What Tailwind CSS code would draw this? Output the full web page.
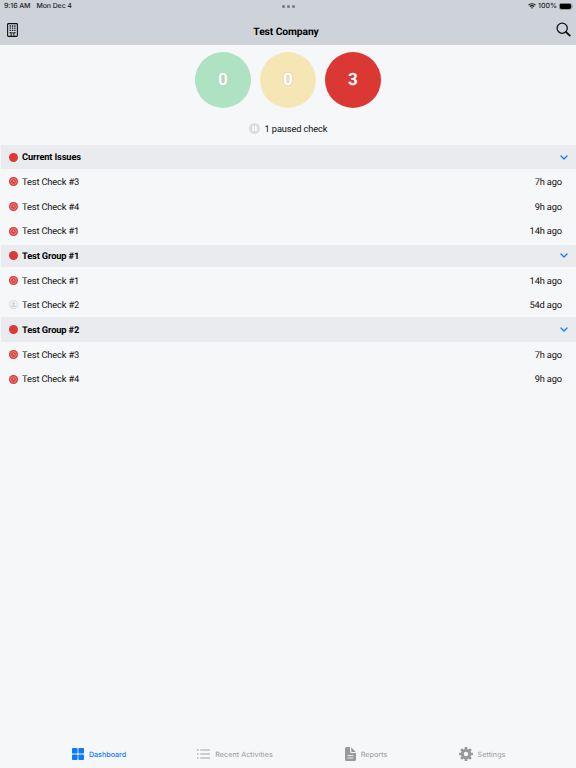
<!DOCTYPE html>
<html lang="en">
<head>
  <meta charset="UTF-8" />
  <meta name="viewport" content="width=device-width, initial-scale=1.0"/>
  <title>Test Company</title>
  <script src="https://cdn.jsdelivr.net/npm/@tailwindcss/browser@4"></script>
</head>
<body class="bg-[#f6f7f9] text-[#111] font-[Roboto,sans-serif] [text-rendering:geometricPrecision]">
  <!-- shared icons -->
  <svg class="hidden">
    <symbol id="alert" viewBox="0 0 18 18">
      <circle cx="9" cy="9" r="9" fill="#dc3935"/>
      <circle cx="9" cy="9" r="5.7" fill="none" stroke="#f3a9a7" stroke-width="1.4"/>
      <path d="M9 6v3.4h2.6M6.6 9.5h1" fill="none" stroke="#f8c9c8" stroke-width="1.3"/>
    </symbol>
    <symbol id="chevron" viewBox="0 0 8 5">
      <path d="M1 1l3 3 3-3" fill="none" stroke="#0a7aff" stroke-width="1.3" stroke-linecap="round" stroke-linejoin="round"/>
    </symbol>
  </svg>

  <div class="w-[576px] h-[768px] flex flex-col overflow-hidden">
    <header class="h-[45px] bg-[#ced2d9] shrink-0">
      <div class="h-3 grid grid-cols-3 items-center pl-1 pr-[3px] font-[Inter,sans-serif] text-[7px] font-medium text-[#222]">
        <div class="flex gap-[6px] whitespace-nowrap tracking-[-0.1px] pt-px"><span>9:16 AM</span><span>Mon Dec 4</span></div>
        <div class="flex justify-center gap-[1.7px]">
          <i class="size-[3px] rounded-full bg-[#74777c]"></i>
          <i class="size-[3px] rounded-full bg-[#74777c]"></i>
          <i class="size-[3px] rounded-full bg-[#74777c]"></i>
        </div>
        <div class="flex justify-end items-center gap-[2px]">
          <svg class="w-2 h-[6px]" viewBox="0 0 16 12" fill="none" stroke="#111" stroke-width="2.2">
            <path d="M1 4.3a10 10 0 0 1 14 0M3.7 7.2a6.2 6.2 0 0 1 8.6 0"/>
            <path d="M5.8 9.3a3.2 3.2 0 0 1 4.4 0L8 11.6z" fill="#111" stroke="none"/>
          </svg>
          <span class="pt-px">100%</span>
          <svg class="w-[14px] h-[7px]" viewBox="0 0 14 7">
            <rect x=".3" y=".3" width="12.2" height="6.2" rx="1.9" fill="none" stroke="#777b80" stroke-width=".6"/>
            <rect x=".8" y=".8" width="11.2" height="5.2" rx="1.4" fill="#000"/>
            <path d="M13.2 2.3v2.2" stroke="#777b80" stroke-width=".8"/>
          </svg>
        </div>
      </div>
      <div class="h-[35px] flex items-center justify-between pl-[7px] pr-[5px]">
        <svg class="w-[11px] h-[14px]" viewBox="0 0 11 14" fill="none" stroke="#111">
          <rect x=".6" y=".6" width="9.8" height="12.8" rx=".8" stroke-width="1.1"/>
          <path d="M2.6 3h1.3M4.9 3h1.3M7.2 3h1.3M2.6 5.2h1.3M4.9 5.2h1.3M7.2 5.2h1.3M2.6 7.4h1.3M4.9 7.4h1.3M7.2 7.4h1.3M2.6 9.6h1.3M7.2 9.6h1.3" stroke-width="1.3"/>
          <path d="M4.1 13.2v-3.3h2.8v3.3" stroke-width=".9"/>
        </svg>
        <h1 class="text-[10.3px] tracking-[-0.1px] font-bold text-black pt-1 pr-0.5">Test Company</h1>
        <svg class="size-[15px]" viewBox="0 0 15 15" fill="none" stroke="#111" stroke-linecap="round">
          <circle cx="6.2" cy="6.2" r="5.1" stroke-width="1.3"/>
          <path d="M10 10l3.8 3.6" stroke-width="1.8"/>
        </svg>
      </div>
    </header>

    <section class="h-[99.8px] shrink-0 pt-[6.5px]">
      <div class="flex justify-center gap-[9px] text-[17px] font-bold text-white">
        <div class="size-14 pt-0.5 rounded-full bg-[#afe2c2] flex items-center justify-center text-shadow-[0_0_2px_#0000002b]">0</div>
        <div class="size-14 pt-0.5 rounded-full bg-[#f6e5b5] flex items-center justify-center text-shadow-[0_0_2px_#0000002b]">0</div>
        <div class="size-14 pt-0.5 rounded-full bg-[#db3833] flex items-center justify-center">3</div>
      </div>
      <div class="flex justify-center items-center gap-[5px] mt-[14px] text-[9.3px] tracking-[-0.13px] leading-3">
        <svg class="size-[11px]" viewBox="0 0 11 11">
          <circle cx="5.5" cy="5.5" r="5.5" fill="#dcddde"/>
          <path d="M4.3 3v5M6.9 3v5" stroke="#fff" stroke-width="1.5"/>
        </svg>
        <span class="pt-0.5">1 paused check</span>
      </div>
    </section>

    <main class="grow ml-px text-[9.3px] tracking-[-0.15px] [&_span]:pt-0.5">
      <div class="h-[24.7px] flex items-center pl-2 pr-2 bg-[#eaebef] font-bold text-black">
        <i class="size-[9px] rounded-full bg-[#dc3935] mr-1"></i>
        <span class="grow">Current Issues</span>
        <svg class="w-2 h-[5px]"><use href="#chevron"/></svg>
      </div>
      <div class="h-[24.7px] flex items-center pl-2 pr-[14px]">
        <svg class="size-[9px] mr-1"><use href="#alert"/></svg>
        <span class="grow">Test Check #3</span><span>7h ago</span>
      </div>
      <div class="h-[24.7px] flex items-center pl-2 pr-[14px]">
        <svg class="size-[9px] mr-1"><use href="#alert"/></svg>
        <span class="grow">Test Check #4</span><span>9h ago</span>
      </div>
      <div class="h-[24.7px] flex items-center pl-2 pr-[14px]">
        <svg class="size-[9px] mr-1"><use href="#alert"/></svg>
        <span class="grow">Test Check #1</span><span>14h ago</span>
      </div>

      <div class="h-[24.7px] pt-px pb-[1.5px] bg-[#eaebef] bg-clip-content font-bold text-black">
        <div class="h-full flex items-center px-2">
          <i class="size-[9px] rounded-full bg-[#dc3935] mr-1"></i>
          <span class="grow">Test Group #1</span>
          <svg class="w-2 h-[5px]"><use href="#chevron"/></svg>
        </div>
      </div>
      <div class="h-[24.7px] flex items-center pl-2 pr-[14px]">
        <svg class="size-[9px] mr-1"><use href="#alert"/></svg>
        <span class="grow">Test Check #1</span><span>14h ago</span>
      </div>
      <div class="h-6 flex items-center pl-2 pr-[14px]">
        <svg class="size-[9px] mr-1" viewBox="0 0 18 18">
          <circle cx="9" cy="9" r="8.2" fill="#f0f1f2" stroke="#d6d8da" stroke-width="1.6"/>
          <circle cx="9" cy="7" r="2.7" fill="#cfd1d3"/>
          <path d="M4 14c0-5 10-5 10 0z" fill="#cfd1d3"/>
        </svg>
        <span class="grow">Test Check #2</span><span>54d ago</span>
      </div>

      <div class="h-[24.7px] pt-px flex items-center pl-2 pr-2 bg-[#eaebef] font-bold text-black">
        <i class="size-[9px] rounded-full bg-[#dc3935] mr-1"></i>
        <span class="grow">Test Group #2</span>
        <svg class="w-2 h-[5px]"><use href="#chevron"/></svg>
      </div>
      <div class="h-[25.4px] pt-px flex items-center pl-2 pr-[14px]">
        <svg class="size-[9px] mr-1"><use href="#alert"/></svg>
        <span class="grow">Test Check #3</span><span>7h ago</span>
      </div>
      <div class="h-[24.7px] flex items-center pl-2 pr-[14px]">
        <svg class="size-[9px] mr-1"><use href="#alert"/></svg>
        <span class="grow">Test Check #4</span><span>9h ago</span>
      </div>
    </main>

    <nav class="h-7 shrink-0 flex px-[33px] font-[Inter,sans-serif] text-[7.15px] text-[#999] [&_span]:pt-0.5">
      <a class="w-[132px] flex items-center justify-center gap-[5px] text-[#0a7aff] font-medium">
        <svg class="size-3" viewBox="0 0 12 12" fill="currentColor">
          <rect width="5.6" height="5.6" rx=".9"/><rect x="6.4" width="5.6" height="5.6" rx=".9"/>
          <rect y="6.4" width="5.6" height="5.6" rx=".9"/><rect x="6.4" y="6.4" width="5.6" height="5.6" rx=".9"/>
        </svg>
        <span>Dashboard</span>
      </a>
      <a class="w-[140px] flex items-center justify-center gap-[5px]">
        <svg class="w-[13px] h-[10px]" viewBox="0 0 13 10" stroke="currentColor" stroke-linecap="round">
          <path d="M3.6 1h9M3.6 5h9M3.6 9h9" stroke-width=".9"/>
          <path d="M.8 1h.01M.8 5h.01M.8 9h.01" stroke-width="1.5"/>
        </svg>
        <span class="tracking-[0.07px]">Recent Activities</span>
      </a>
      <a class="w-[122px] flex items-center justify-center gap-[5px]">
        <svg class="w-[11px] h-[14px]" viewBox="0 0 11 14" fill="currentColor">
          <path d="M1.5 0H5v4.5Q5 6 6.5 6H11v6.5Q11 14 9.5 14h-8Q0 14 0 12.5v-11Q0 0 1.5 0zM6.2.2L10.8 4.9H6.8Q6.2 4.9 6.2 4.3z"/>
          <path d="M2.6 8.6h5.8M2.6 11h5.8" stroke="#f6f7f9" stroke-width=".9"/>
        </svg>
        <span class="tracking-[0.07px]">Reports</span>
      </a>
      <a class="w-[110px] flex items-center justify-center gap-[5px]">
        <svg class="size-[14px]" viewBox="-7 -7 14 14" fill="none" stroke="currentColor">
          <circle r="3.7" stroke-width="3"/>
          <path d="M0-4.5V-6.9M0 4.5V6.9M-4.5 0H-6.9M4.5 0H6.9M3.2-3.2L4.9-4.9M-3.2 3.2L-4.9 4.9M3.2 3.2L4.9 4.9M-3.2-3.2L-4.9-4.9" stroke-width="2.7"/>
        </svg>
        <span class="tracking-[0.07px]">Settings</span>
      </a>
    </nav>
  </div>
</body>
</html>
